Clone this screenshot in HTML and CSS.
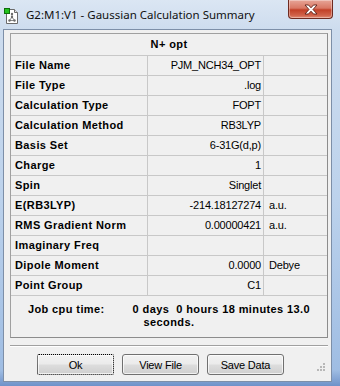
FILE: index.html
```html
<!DOCTYPE html>
<html>
<head>
<meta charset="utf-8">
<link rel="stylesheet" href="styles.css">
</head>
<body>
<div class="window">
  <div class="titlebar">
    <svg class="app-icon" width="16" height="17" viewBox="0 0 16 17">
      <path d="M2.5 1.5 H10.5 L13.5 4.5 V15.5 H2.5 Z" fill="#fff" stroke="#6b6b6b"/>
      <path d="M10.5 1.5 V4.5 H13.5" fill="#e6e6e6" stroke="#6b6b6b"/>
      <rect x="0.5" y="0.5" width="5" height="5" fill="#22c21e" stroke="#0d6e0b"/>
      <path d="M8 6 V9 M8 9 L5.5 12.5 M8 9 L10.5 12.5 M5.5 12.5 H10.5" stroke="#8a8a8a" stroke-width="1" fill="none"/>
      <circle cx="8" cy="6" r="1.2" fill="#6b6b6b"/>
      <circle cx="8" cy="9" r="1.2" fill="#6b6b6b"/>
      <circle cx="5.5" cy="12.5" r="1.2" fill="#6b6b6b"/>
      <circle cx="10.5" cy="12.5" r="1.2" fill="#6b6b6b"/>
    </svg>
    <span class="title">G2:M1:V1 - Gaussian Calculation Summary</span>
    <div class="close">
      <svg width="16" height="11" viewBox="0 0 16 11">
        <path d="M2 1 H5.5 L8 3.8 L10.5 1 H14 L10 5.5 L14 10 H10.5 L8 7.2 L5.5 10 H2 L6 5.5 Z" fill="#fff" stroke="#5a1d14" stroke-width="0.9" stroke-linejoin="round"/>
      </svg>
    </div>
  </div>
  <div class="client">
    <div class="summary">
      <div class="head">N+ opt</div>
      <div class="lbl">File Name</div><div class="val">PJM_NCH34_OPT</div><div class="unit"></div>
      <div class="lbl">File Type</div><div class="val">.log</div><div class="unit"></div>
      <div class="lbl">Calculation Type</div><div class="val">FOPT</div><div class="unit"></div>
      <div class="lbl">Calculation Method</div><div class="val">RB3LYP</div><div class="unit"></div>
      <div class="lbl">Basis Set</div><div class="val">6-31G(d,p)</div><div class="unit"></div>
      <div class="lbl">Charge</div><div class="val">1</div><div class="unit"></div>
      <div class="lbl">Spin</div><div class="val">Singlet</div><div class="unit"></div>
      <div class="lbl">E(RB3LYP)</div><div class="val">-214.18127274</div><div class="unit">a.u.</div>
      <div class="lbl">RMS Gradient Norm</div><div class="val">0.00000421</div><div class="unit">a.u.</div>
      <div class="lbl">Imaginary Freq</div><div class="val"></div><div class="unit"></div>
      <div class="lbl">Dipole Moment</div><div class="val">0.0000</div><div class="unit">Debye</div>
      <div class="lbl">Point Group</div><div class="val">C1</div><div class="unit"></div>
      <div class="cpu"><p>Job cpu time:<span class="gap"></span>0 days&nbsp; 0 hours 18 minutes 13.0 seconds.</p></div>
    </div>
    <div class="sep"></div>
    <div class="buttons">
      <button class="btn focus">Ok</button>
      <button class="btn">View File</button>
      <button class="btn">Save Data</button>
    </div>
    <div class="grip">
      <svg width="9" height="9" viewBox="0 0 9 9">
        <g fill="#b8b8b8">
          <rect x="6" y="0" width="2" height="2"/>
          <rect x="3" y="3" width="2" height="2"/><rect x="6" y="3" width="2" height="2"/>
          <rect x="0" y="6" width="2" height="2"/><rect x="3" y="6" width="2" height="2"/><rect x="6" y="6" width="2" height="2"/>
        </g>
      </svg>
    </div>
  </div>
</div>
</body>
</html>
```

FILE: styles.css
```css
* { box-sizing: border-box; }
html, body { margin: 0; padding: 0; }
body { width: 340px; height: 386px; overflow: hidden; background: #a9c4e4; }

.window {
  width: 340px;
  height: 386px;
  display: flex;
  flex-direction: column;
  background: linear-gradient(180deg, #dbe6f3 0px, #cddcee 30px, #bcd2ec 200px, #9fbde3 370px, #6f92c9 386px);
}

.titlebar {
  height: 29px;
  display: flex;
  align-items: flex-start;
  position: relative;
}
.app-icon { margin: 8px 0 0 4px; flex: none; }
.title {
  margin: 7px 0 0 6px;
  font-family: "Noto Sans", "Open Sans", sans-serif;
  font-size: 11.5px;
  line-height: 16px;
  color: #111;
  white-space: nowrap;
}
.close {
  margin-left: auto;
  margin-right: 7px;
  width: 45px;
  height: 19px;
  border: 1px solid #6e2a20;
  border-top: none;
  border-radius: 0 0 4px 4px;
  background: linear-gradient(180deg, #e7a597 0%, #d97864 45%, #c24027 55%, #d0624a 85%, #e08b74 100%);
  box-shadow: inset 0 0 0 1px rgba(255,255,255,0.35);
  display: flex;
  align-items: center;
  justify-content: center;
}

.client {
  margin: 0 8px 4px 3px;
  flex: 1;
  background: #f0f0f0;
  border: 1px solid #7d8fa8;
  padding: 3px 0 0 6px;
  position: relative;
  font-family: "Liberation Sans", Arial, sans-serif;
  font-size: 11px;
  color: #000;
}

.summary {
  width: 318px;
  display: grid;
  grid-template-columns: 137px 116px 1fr;
  border: 1px solid #a0a0a0;
  border-right-color: #8c8c8c;
  border-bottom-color: #8c8c8c;
}
.head {
  grid-column: 1 / -1;
  height: 22px;
  border-bottom: 1px solid #c8c8c8;
  text-align: center;
  font-weight: bold;
  letter-spacing: 0.4px;
  line-height: 21px;
}
.lbl, .val, .unit {
  height: 20px;
  line-height: 19px;
  border-bottom: 1px solid #c8c8c8;
  white-space: nowrap;
}
.lbl { font-weight: bold; letter-spacing: 0.4px; padding-left: 4px; border-right: 1px solid #c8c8c8; }
.val { text-align: right; padding-right: 2px; border-right: 1px solid #c8c8c8; letter-spacing: -0.2px; }
.unit { padding-left: 5px; letter-spacing: -0.2px; }
.cpu {
  grid-column: 1 / -1;
  height: 41px;
  padding-top: 7px;
}
.cpu p {
  margin: 0;
  text-align: center;
  font-weight: bold;
  letter-spacing: 0.4px;
  line-height: 13px;
  padding: 0 8px;
}
.gap { display: inline-block; width: 28px; }

.sep {
  width: 318px;
  margin-top: 7px;
  height: 2px;
  border-top: 1px solid #a0a0a0;
  border-bottom: 1px solid #fff;
}

.buttons {
  display: flex;
  gap: 8px;
  margin: 7px 0 0 27px;
}
.btn {
  width: 77px;
  height: 21px;
  padding: 0;
  border: 1px solid #707070;
  border-radius: 3px;
  background: linear-gradient(180deg, #f2f2f2 0%, #ebebeb 48%, #dddddd 52%, #cfcfcf 100%);
  box-shadow: inset 0 0 0 1px rgba(255,255,255,0.7);
  font-family: "Liberation Sans", Arial, sans-serif;
  font-size: 11px;
  letter-spacing: -0.2px;
  color: #000;
}
.btn.focus {
  border: 1px dotted #000;
  border-radius: 2px;
}

.grip {
  position: absolute;
  right: 5px;
  bottom: 9px;
  line-height: 0;
}
```
